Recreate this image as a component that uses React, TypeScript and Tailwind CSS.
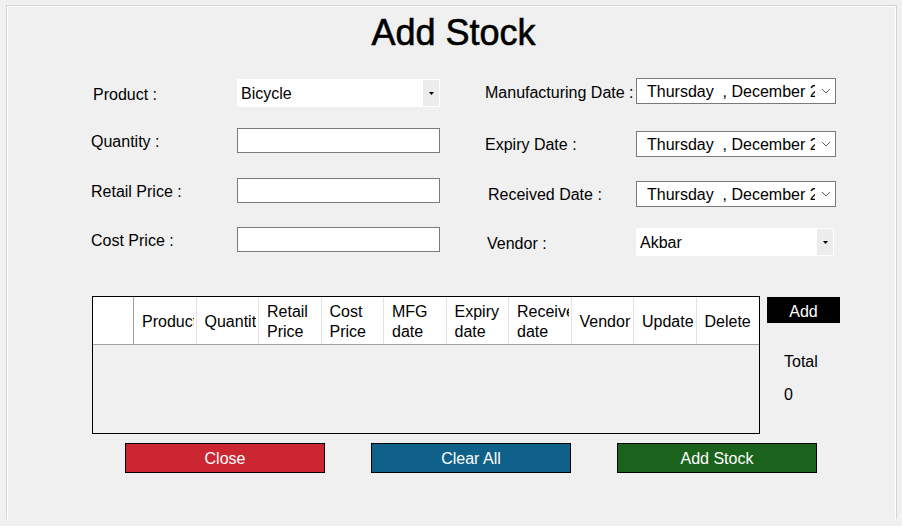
const font = { fontFamily: '"Liberation Sans", Arial, sans-serif' };

const Arrow = () => (
    <svg width="5" height="3" viewBox="0 0 5 3">
        <path d="M0 0h5L2.5 3z" fill="#000" />
    </svg>
);

const Chevron = () => (
    <svg width="10" height="6" viewBox="0 0 10 6">
        <path d="M1 1l4 4 4-4" fill="none" stroke="#606060" strokeWidth="1" />
    </svg>
);

const Combo = ({ value, width }: { value: string; width: string }) => (
    <div className={`${width} h-[28px] bg-white flex p-[1px]`}>
        <div className="flex-1 flex items-center pl-[3px] pt-[2px] text-[16px] leading-[18px]">{value}</div>
        <div className="w-[16px] bg-[#ececec] flex items-center justify-center">
            <Arrow />
        </div>
    </div>
);

const TextBox = () => <div className="w-[203px] h-[25px] border border-[#7a7a7a] bg-white" />;

const DatePicker = () => (
    <div className="w-[200px] h-[26px] border border-[#7a7a7a] bg-white flex items-center">
        <div className="flex-1 overflow-hidden whitespace-pre pl-[10px] pt-[2px] text-[16px] leading-[18px] mr-[3px]">
            Thursday  , December 22, 2022
        </div>
        <div className="w-[17px] flex items-center justify-center pr-[2px]">
            <Chevron />
        </div>
    </div>
);

const columns: string[][] = [
    ['Product'],
    ['Quantity'],
    ['Retail', 'Price'],
    ['Cost', 'Price'],
    ['MFG', 'date'],
    ['Expiry', 'date'],
    ['Received', 'date'],
    ['Vendor'],
    ['Update'],
    ['Delete'],
];

export default function App() {
    return (
        <div className="w-[902px] h-[530px] bg-[#f0f0f0] flex flex-col overflow-hidden text-black" style={font}>
            <div className="pt-[5px] pl-[6px] flex-1">
                <div className="w-[891px] h-[514px] border-t border-l border-r border-[#d4d4d4] shadow-[inset_1px_1px_0_#ffffff,inset_-1px_0_0_#ffffff]">
                    <h1 className="mt-[9px] pl-[4px] text-center text-[36px] leading-[36px] [-webkit-text-stroke:0.6px_#000]">
                        Add Stock
                    </h1>

                    {/* form fields */}
                    <div className="mt-[27px] pl-[84px] flex text-[16px] leading-[18px]">
                        <div className="w-[394px] pt-[1px] flex flex-col">
                            <div className="flex items-center">
                                <span className="w-[146px] pl-[2px] pt-[3px]">Product :</span>
                                <Combo value="Bicycle" width="w-[203px]" />
                            </div>
                            <div className="mt-[21px] flex items-center">
                                <span className="w-[146px] pt-[3px]">Quantity :</span>
                                <TextBox />
                            </div>
                            <div className="mt-[25px] flex items-center">
                                <span className="w-[146px] pt-[2px]">Retail Price :</span>
                                <TextBox />
                            </div>
                            <div className="mt-[24px] flex items-center">
                                <span className="w-[146px] pt-[2px]">Cost Price :</span>
                                <TextBox />
                            </div>
                        </div>
                        <div className="flex flex-col">
                            <div className="flex items-center">
                                <span className="w-[151px] pt-[3px]">Manufacturing Date :</span>
                                <DatePicker />
                            </div>
                            <div className="mt-[27px] flex items-center">
                                <span className="w-[151px] pt-[2px]">Expiry Date :</span>
                                <DatePicker />
                            </div>
                            <div className="mt-[24px] flex items-center">
                                <span className="w-[151px] pl-[3px] pt-[1px]">Received Date :</span>
                                <DatePicker />
                            </div>
                            <div className="mt-[21px] flex items-center">
                                <span className="w-[151px] pl-[2px] pt-[3px]">Vendor :</span>
                                <Combo value="Akbar" width="w-[198px]" />
                            </div>
                        </div>
                    </div>

                    {/* grid + side panel */}
                    <div className="mt-[40px] pl-[85px] flex text-[16px]">
                        <div className="w-[668px] h-[138px] border border-black flex flex-col">
                            <div className="h-[48px] bg-white border-b border-[#a0a0a0] grid grid-cols-[41px_repeat(10,62.5px)]">
                                <div className="border-r border-[#a0a0a0]" />
                                {columns.map((lines, i) => (
                                    <div key={i} className="border-r border-[#e3e3e3] last:border-r-0 pr-[2px] flex">
                                        <div className="flex-1 overflow-hidden pl-[8px] pt-[2px] flex flex-col justify-center leading-[20px] whitespace-nowrap">
                                            {lines.map((l) => (
                                                <span key={l}>{l}</span>
                                            ))}
                                        </div>
                                    </div>
                                ))}
                            </div>
                            <div className="flex-1 bg-[#f0f0f0]" />
                        </div>
                        <div className="ml-[7px] w-[73px] flex flex-col leading-[18px]">
                            <button className="mt-[1px] h-[26px] pt-[3px] bg-black text-white text-[16px] leading-[18px]">
                                Add
                            </button>
                            <span className="mt-[30px] pl-[17px]">Total</span>
                            <span className="mt-[15px] pl-[17px]">0</span>
                        </div>
                    </div>

                    {/* action buttons */}
                    <div className="mt-[9px] pl-[118px] flex gap-[46px] text-[16px] leading-[18px] text-white">
                        <button className="w-[200px] h-[30px] pt-[2px] border border-black bg-[#cb2632]">Close</button>
                        <button className="w-[200px] h-[30px] pt-[2px] border border-black bg-[#0f618a]">Clear All</button>
                        <button className="w-[200px] h-[30px] pt-[2px] border border-black bg-[#1b621c]">Add Stock</button>
                    </div>
                </div>
            </div>
            <div className="h-[4px] bg-white" />
        </div>
    );
}
